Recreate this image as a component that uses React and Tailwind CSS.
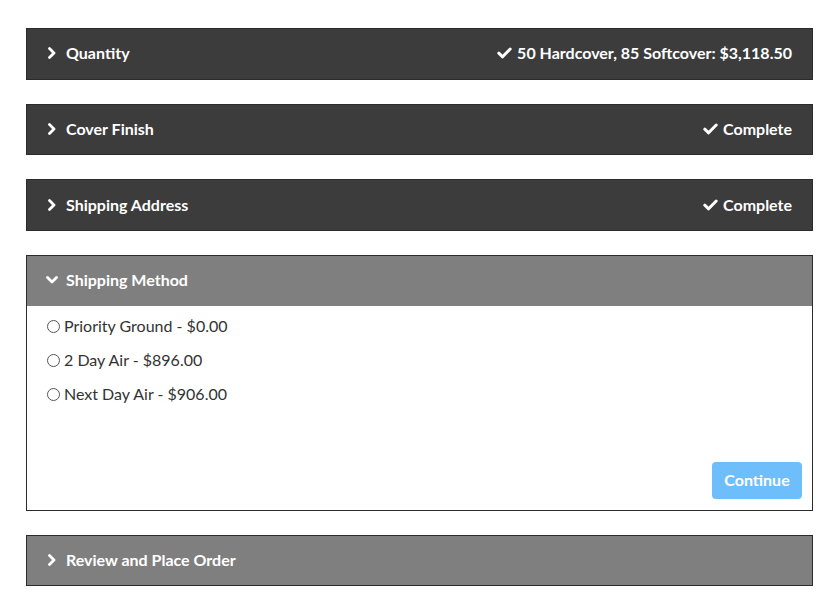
import React from "react";

const Chevron = ({ down }) => (
  <svg width="12" height="12" viewBox="0 0 12 12" className="shrink-0">
    {down ? (
      <path d="M1.5 3.5 L6 8 L10.5 3.5" fill="none" stroke="white" strokeWidth="2.8" strokeLinecap="round" strokeLinejoin="round" />
    ) : (
      <path d="M3.5 1.5 L8 6 L3.5 10.5" fill="none" stroke="white" strokeWidth="2.8" strokeLinecap="round" strokeLinejoin="round" />
    )}
  </svg>
);

const Check = () => (
  <svg width="15" height="12" viewBox="0 0 15 12" className="shrink-0">
    <path d="M1.8 6.2 L5.6 9.8 L13.2 2" fill="none" stroke="white" strokeWidth="3" strokeLinecap="round" strokeLinejoin="round" />
  </svg>
);

const Header = ({ title, status, gray, down }) => (
  <div className={`flex h-[49.67px] items-center justify-between pb-[1px] pl-[19px] pr-5 ${gray ? "bg-[#7f7f7f]" : "bg-[#3c3c3c]"}`}>
    <div className="flex items-center gap-[8px]">
      <Chevron down={down} />
      <span className="text-[16px] font-bold text-white">{title}</span>
    </div>
    {status && (
      <div className="flex items-center gap-[5px]">
        <Check />
        <span className="text-[16px] font-bold text-white">{status}</span>
      </div>
    )}
  </div>
);

export default function App() {
  const options = ["Priority Ground - $0.00", "2 Day Air - $896.00", "Next Day Air - $906.00"];
  return (
    <div className="min-h-[603px] w-[840px] bg-white pl-[26px] pr-[27px] pt-[28px]" style={{ fontFamily: "Lato, 'Liberation Sans', sans-serif" }}>
      <div className="flex flex-col gap-6">
        <div className="border border-[#2b2b2b]">
          <Header title="Quantity" status="50 Hardcover, 85 Softcover: $3,118.50" />
        </div>
        <div className="border border-[#2b2b2b]">
          <Header title="Cover Finish" status="Complete" />
        </div>
        <div className="border border-[#2b2b2b]">
          <Header title="Shipping Address" status="Complete" />
        </div>
        <div className="border border-[#2b2b2b]">
          <Header title="Shipping Method" gray down />
          <div className="flex h-[204px] flex-col px-5 pb-[11px] pt-[10px]">
            <div className="flex flex-col gap-[13px]">
              {options.map((o) => (
                <label key={o} className="flex h-[21px] items-center gap-[4px] text-[16px] text-[#333]">
                  <span className="h-[13px] w-[13px] rounded-full border border-[#555] bg-white" />
                  <span>{o}</span>
                </label>
              ))}
            </div>
            <div className="mt-auto flex justify-end">
              <button className="-mr-[10px] h-[37px] w-[90px] rounded-[4px] bg-[#6ebefc] text-[16px] font-bold text-white">Continue</button>
            </div>
          </div>
        </div>
        <div className="border border-[#2b2b2b]">
          <Header title="Review and Place Order" gray />
        </div>
      </div>
    </div>
  );
}
